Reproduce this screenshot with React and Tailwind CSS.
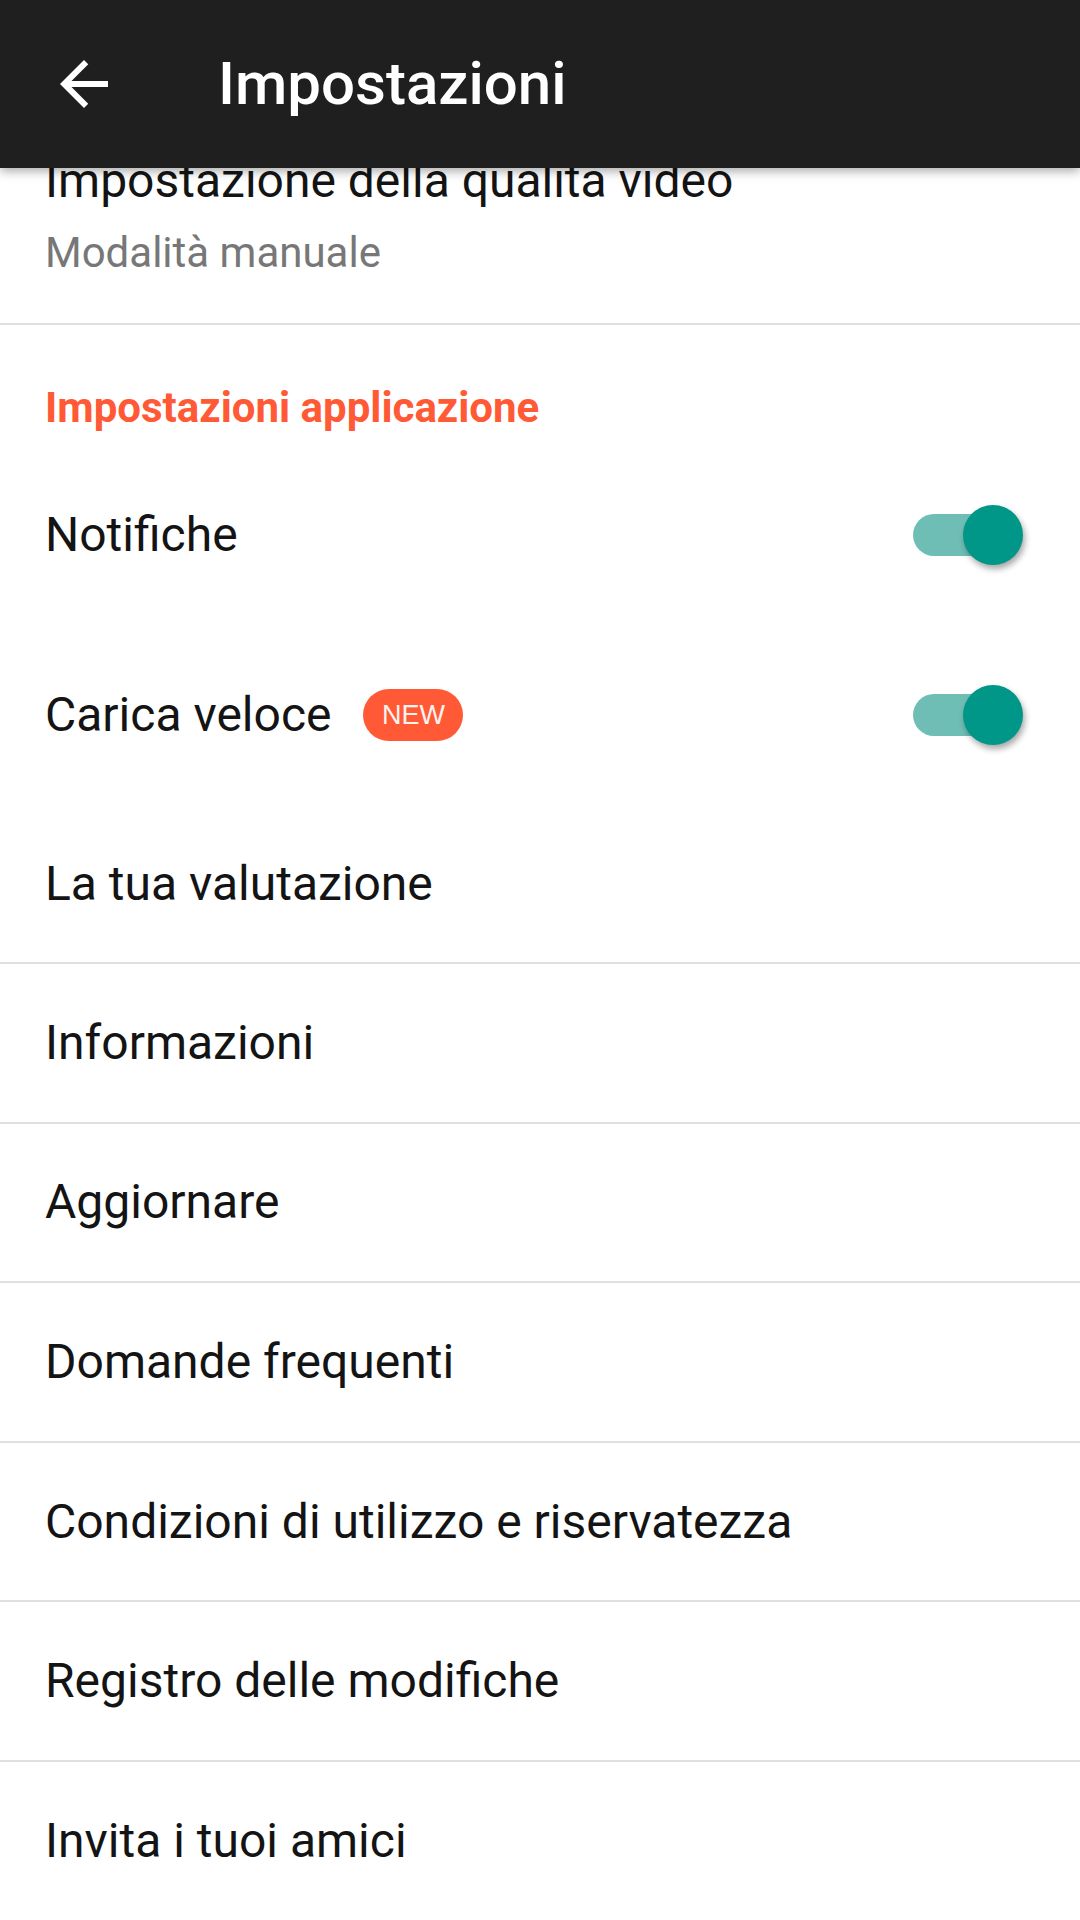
import React from "react";

function Toggle() {
  return (
    <div className="relative w-[110px] h-[60px] flex items-center">
      <div className="w-[102px] h-[42px] rounded-full bg-[#6fbeb5]" />
      <div className="absolute right-0 top-0 w-[60px] h-[60px] rounded-full bg-[#009688] shadow-[2px_4px_6px_rgba(0,0,0,0.35)]" />
    </div>
  );
}

function Divider() {
  return <div className="h-[2px] bg-[#e0e0e0] shrink-0" />;
}

function Row({ children }) {
  return (
    <div className="h-[157.6px] shrink-0 flex items-center pl-[45px] text-[48px] text-[#141414]">
      {children}
    </div>
  );
}

export default function App() {
  const items = [
    "Informazioni",
    "Aggiornare",
    "Domande frequenti",
    "Condizioni di utilizzo e riservatezza",
    "Registro delle modifiche",
    "Invita i tuoi amici",
  ];
  return (
    <div className="w-[1080px] h-[1920px] bg-white overflow-hidden flex flex-col font-['Roboto',sans-serif]">
      <div className="relative z-10 h-[168px] shrink-0 bg-[#1f1f1f] flex items-center shadow-[0_3px_10px_rgba(0,0,0,0.35)]">
        <div className="ml-[48px] w-[72px] h-[72px] flex items-center justify-center">
          <svg viewBox="0 0 24 24" width="72" height="72" fill="#ffffff">
            <path d="M20 11H7.83l5.59-5.59L12 4l-8 8 8 8 1.41-1.41L7.83 13H20v-2z" />
          </svg>
        </div>
        <div className="ml-[98px] text-[60px] font-medium text-white leading-none">
          Impostazioni
        </div>
      </div>
      <div className="flex-1 overflow-hidden flex flex-col">
        <div className="-mt-[19px] pl-[45px] pb-[42px] shrink-0">
          <div className="text-[48px] leading-[64px] text-[#141414]">
            Impostazione della qualità video
          </div>
          <div className="mt-[12px] text-[42px] leading-[56px] text-[#777777]">
            Modalità manuale
          </div>
        </div>
        <Divider />
        <div className="pt-[55px] pb-[9px] pl-[45px] shrink-0">
          <div className="text-[42px] leading-[56px] font-bold text-[#ff5a35]">
            Impostazioni applicazione
          </div>
        </div>
        <div className="h-[180px] shrink-0 flex items-center justify-between pl-[45px] pr-[57px] text-[48px] text-[#141414]">
          <span>Notifiche</span>
          <Toggle />
        </div>
        <div className="h-[180px] shrink-0 flex items-center justify-between pl-[45px] pr-[57px] text-[48px] text-[#141414]">
          <div className="flex items-center">
            <span>Carica veloce</span>
            <span className="ml-[32px] w-[100px] h-[52px] rounded-full bg-[#ff5a35] flex items-center justify-center text-[27px] text-[#fff4f0] font-['Liberation_Sans',sans-serif] leading-none">
              NEW
            </span>
          </div>
          <Toggle />
        </div>
        <div className="h-[157px] shrink-0 flex items-center pl-[45px] text-[48px] text-[#141414]">
          La tua valutazione
        </div>
        {items.map((t) => (
          <React.Fragment key={t}>
            <Divider />
            <Row>{t}</Row>
          </React.Fragment>
        ))}
      </div>
    </div>
  );
}
